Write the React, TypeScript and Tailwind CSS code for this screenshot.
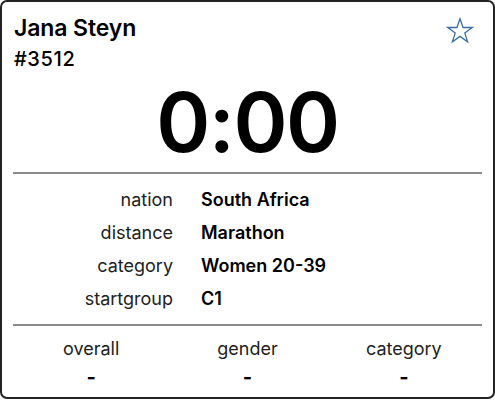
const details = [
  { label: "nation", value: "South Africa" },
  { label: "distance", value: "Marathon" },
  { label: "category", value: "Women 20-39" },
  { label: "startgroup", value: "C1" },
];

const ranks = [
  { label: "overall", value: "-" },
  { label: "gender", value: "-" },
  { label: "category", value: "-" },
];

export default function App() {
  return (
    <div className="w-[495px] h-[400px] bg-white font-['Inter',sans-serif] text-black">
      <div className="h-[399px] border-2 border-[#222] rounded-[7px] px-[11px] flex flex-col">
        <div className="flex justify-between items-start h-[70px] pt-[12px]">
          <div className="pl-[1px]">
            <div className="text-[23px] leading-[28px] font-semibold tracking-[-0.1px]">Jana Steyn</div>
            <div className="text-[20px] leading-[24px] font-medium mt-[5px] tracking-[0.6px]">#3512</div>
          </div>
          <svg
            className="mt-[3px] mr-[8px]"
            width="28"
            height="28"
            viewBox="0 0 24 24"
            fill="none"
            stroke="#3b6fa8"
            strokeWidth="1.1"
            strokeLinejoin="miter"
          >
            <polygon points="12,1.5 14.6,9 22.5,9 16.1,13.7 18.5,21.3 12,16.6 5.5,21.3 7.9,13.7 1.5,9 9.4,9" />
          </svg>
        </div>
        <div className="flex justify-center h-[100px] items-center pt-[2px]">
          <span className="text-[82px] leading-none font-semibold tracking-[-1.5px]">0:00</span>
        </div>
        <div className="h-[2px] bg-[#8a8a8a]" />
        <div className="flex flex-col pt-[9px] pb-[9px]">
          {details.map((d) => (
            <div key={d.label} className="grid grid-cols-[160px_1fr] gap-x-[28px] h-[33px] items-center text-[18px]">
              <span className="text-right text-[#222]">{d.label}</span>
              <span className="font-semibold">{d.value}</span>
            </div>
          ))}
        </div>
        <div className="h-[2px] bg-[#8a8a8a]" />
        <div className="grid grid-cols-3 pt-[11px]">
          {ranks.map((r) => (
            <div key={r.label} className="flex flex-col items-center">
              <span className="text-[18px] leading-[24px] text-[#222]">{r.label}</span>
              <span className="text-[20px] leading-[32px] font-bold">{r.value}</span>
            </div>
          ))}
        </div>
      </div>
    </div>
  );
}
